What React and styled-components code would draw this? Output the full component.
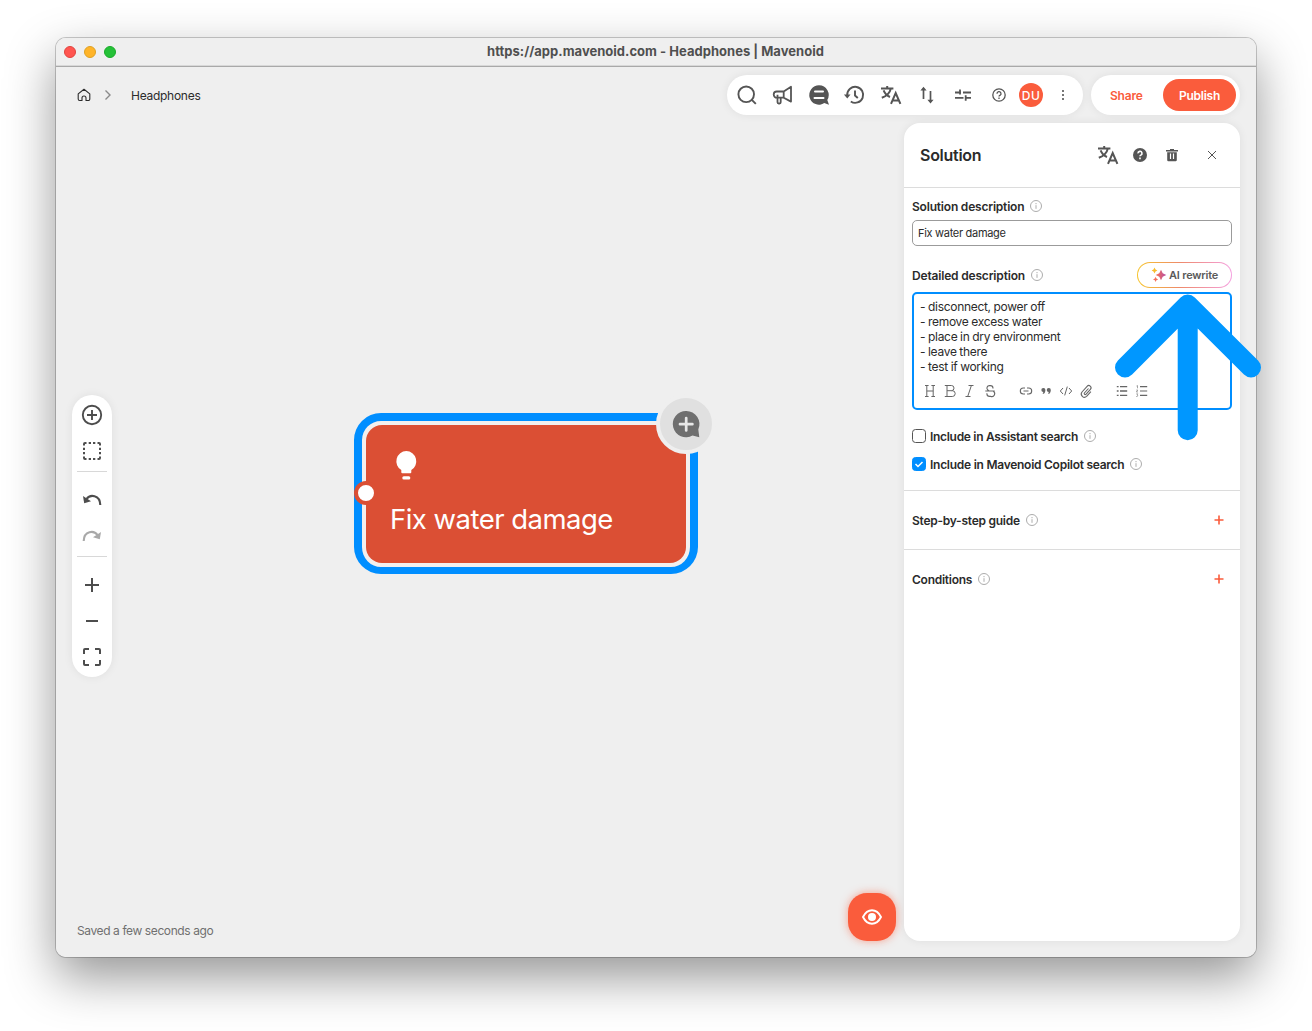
import styled, { createGlobalStyle } from "styled-components";

const GlobalStyle = createGlobalStyle`
    *, *::before, *::after {
        box-sizing: border-box;
    }

    body {
        margin: 0;
        background: #fff;
        color: #2b2b2b;
        font-family: Inter, Roboto, "Liberation Sans", sans-serif;
        font-size: 12px;
        overflow: hidden;
    }

    button, input, textarea {
        font: inherit;
        color: inherit;
        letter-spacing: inherit;
    }

    button {
        border: 0;
        padding: 0;
        background: none;
    }
`;

const Desktop = styled.div`
    position: relative;
    width: 1312px;
    height: 1031px;
    padding: 38px 56px;
`;

const Window = styled.div`
    display: flex;
    flex-direction: column;
    width: 1200px;
    height: 919px;
    overflow: hidden;
    background: #efefef;
    border-radius: 10px;
`;

const WindowShadow = styled.div`
    border-radius: 10px;
    width: 1200px;
    box-shadow:
        0 0 0 1px rgba(0, 0, 0, 0.2),
        0 20px 50px rgba(0, 0, 0, 0.42);
`;

const TitleBar = styled.div`
    display: grid;
    grid-template-columns: 80px 1fr 80px;
    align-items: center;
    flex: none;
    height: 29px;
    padding: 0 8px 1px;
    background: #efefef;
    border-bottom: 1px solid #a9a9a9;
    box-shadow: inset 0 -1px 0 #d8d8d8;
`;

const Lights = styled.div`
    display: flex;
    gap: 8px;
`;

const Light = styled.span`
    width: 12px;
    height: 12px;
    border-radius: 50%;
    background: ${(p) => p.$fill};
    border: 1px solid ${(p) => p.$ring};
`;

const WindowTitle = styled.div`
    padding-bottom: 1px;
    margin-left: -1px;
    font-size: 13px;
    font-weight: 700;
    letter-spacing: 0.02px;
    text-align: center;
    white-space: nowrap;
    color: #4f4f4f;
`;

const Workspace = styled.div`
    position: relative;
    display: flex;
    flex-direction: column;
    gap: 8px;
    flex: 1;
    min-height: 0;
    padding: 8px 16px 16px;
`;

const TopBar = styled.div`
    display: flex;
    align-items: center;
    gap: 8px;
    height: 40px;
    flex: none;
`;

const Breadcrumb = styled.nav`
    display: flex;
    align-items: center;
    flex: 1;
    padding-left: 4px;
    letter-spacing: -0.27px;
`;

const Crumb = styled.span`
    margin-left: 15px;
    line-height: 16px;
    padding-top: 1px;
`;

const Pill = styled.div`
    display: flex;
    align-items: center;
    height: 40px;
    background: #fff;
    border-radius: 20px;
    box-shadow: 0 0 10px rgba(0, 0, 0, 0.07);
`;

const ToolPill = styled(Pill)`
    width: 356px;
    padding: 0 4px 0 2px;
`;

const ToolButton = styled.button`
    display: flex;
    align-items: center;
    justify-content: center;
    width: ${(p) => p.$w || 36}px;
    height: 36px;
    flex: none;
    color: #555;
    margin-left: ${(p) => p.$gap || 0}px;
`;

const Avatar = styled.span`
    display: flex;
    align-items: center;
    justify-content: center;
    width: 24px;
    height: 24px;
    border-radius: 50%;
    background: #fa5c3c;
    color: #fff;
    font-size: 12px;
    font-weight: 500;
    letter-spacing: 0.6px;
`;

const ActionPill = styled(Pill)`
    width: 149px;
    justify-content: space-between;
    padding: 0 4px 0 19px;
`;

const ShareButton = styled.button`
    color: #fa5c3c;
    font-weight: 600;
    letter-spacing: -0.2px;
`;

const PublishButton = styled.button`
    width: 73px;
    height: 32px;
    border-radius: 16px;
    background: #fa5c3c;
    color: #fff;
    font-weight: 600;
    letter-spacing: -0.25px;
`;

const Main = styled.div`
    display: flex;
    gap: 8px;
    flex: 1;
    min-height: 0;
`;

const CanvasColumn = styled.div`
    display: flex;
    flex-direction: column;
    flex: 1;
`;

const Rail = styled.div`
    display: flex;
    flex-direction: column;
    align-items: center;
    width: 40px;
    height: 282px;
    margin-top: 272px;
    padding: 2px 0;
    border-radius: 20px;
    background: #fff;
    box-shadow: 0 0 10px rgba(0, 0, 0, 0.07);
`;

const RailButton = styled.button`
    display: flex;
    align-items: center;
    justify-content: center;
    width: 36px;
    height: 36px;
    flex: none;
    color: ${(p) => (p.$muted ? "#a9a9a9" : "#4d4d4d")};
`;

const RailDivider = styled.div`
    width: 30px;
    height: 1px;
    flex: none;
    margin: 2px 0 10px;
    background: #d8d8d8;
`;

const CanvasFooter = styled.div`
    display: flex;
    align-items: flex-end;
    justify-content: space-between;
    margin-top: auto;
`;

const SaveStatus = styled.div`
    padding: 0 0 2px 5px;
    line-height: 16px;
    color: #707070;
    letter-spacing: -0.4px;
`;

const PreviewButton = styled.button`
    display: flex;
    align-items: center;
    justify-content: center;
    width: 48px;
    height: 48px;
    border-radius: 19px;
    background: #fa5c3c;
    color: #fff;
    box-shadow: 0 0 8px rgba(250, 92, 60, 0.55);
`;

/* Flow node, placed freely on the canvas */
const Node = styled.div`
    position: absolute;
    left: 298px;
    top: 346px;
    width: 344px;
    height: 161px;
    padding: 4px;
    border: 8px solid #008eff;
    border-bottom-width: 7px;
    border-radius: 27px;
    background: #f3efee;
`;

const NodeCard = styled.div`
    width: 320px;
    height: 138px;
    padding: 25px 24px;
    border-radius: 16px;
    background: #db4f34;
    color: #fff;
`;

const NodeTitle = styled.div`
    margin-top: 20px;
    font-size: 27.5px;
    line-height: 34px;
    letter-spacing: -0.52px;
    white-space: nowrap;
`;

const NodePort = styled.span`
    position: absolute;
    left: -8px;
    top: 60px;
    width: 24px;
    height: 24px;
    border-radius: 50%;
    border: 4px solid #db4f34;
    background: #fff;
`;

const NodeAdd = styled.button`
    position: absolute;
    left: 294px;
    top: -27px;
    display: flex;
    align-items: center;
    justify-content: center;
    width: 60px;
    height: 60px;
    border-radius: 50%;
    border: 4px solid #efefef;
    background: #e0e0e0;
    color: #6f6f6f;
`;

const Panel = styled.aside`
    width: 336px;
    flex: none;
    border-radius: 16px;
    background: #fff;
    box-shadow: 0 0 10px rgba(0, 0, 0, 0.07);
`;

const PanelHeader = styled.header`
    display: flex;
    align-items: center;
    height: 65px;
    padding: 0 12px 1px 16px;
    border-bottom: 1px solid #dcdcdc;
`;

const PanelTitle = styled.h2`
    flex: 1;
    margin: 0;
    font-size: 16px;
    font-weight: 600;
    letter-spacing: -0.28px;
`;

const PanelButton = styled.button`
    display: flex;
    align-items: center;
    justify-content: center;
    width: 32px;
    height: 32px;
    color: #555;
    margin-left: ${(p) => p.$gap || 0}px;
`;

const Section = styled.section`
    padding: 9px 8px 0;
    height: 303px;
    border-bottom: 1px solid #dcdcdc;
`;

const Label = styled.div`
    display: flex;
    align-items: center;
    gap: 6px;
    height: 18px;
    font-weight: 600;
    letter-spacing: ${(p) => p.$spacing || "-0.26px"};
    white-space: nowrap;
`;

const TextInput = styled.input`
    display: block;
    width: 320px;
    height: 26px;
    margin-top: 5px;
    padding: 0 5px;
    border: 1px solid #9b9b9b;
    border-radius: 5px;
    background: #fff;
    font-size: 11px;
    letter-spacing: -0.3px;
    outline: 0;
`;

const DetailRow = styled.div`
    display: flex;
    align-items: center;
    justify-content: space-between;
    height: 26px;
    margin: 16px 0 4px;
`;

const RewriteButton = styled.button`
    display: flex;
    align-items: center;
    gap: 2px;
    width: 95px;
    height: 26px;
    padding-left: 13px;
    border: 1px solid transparent;
    border-radius: 13px;
    background:
        linear-gradient(#fff, #fff) padding-box,
        linear-gradient(90deg, #f7c52b, #ee8a6b 45%, #f5a0e0) border-box;
    font-size: 11px;
    font-weight: 600;
    letter-spacing: -0.2px;
    color: #5a5a5a;
    white-space: nowrap;
`;

const Editor = styled.div`
    width: 320px;
    height: 118px;
    padding: 5px 6px;
    border: 2px solid #008eff;
    border-radius: 5px;
`;

const EditorText = styled.div`
    height: 75px;
    line-height: 15px;
    letter-spacing: -0.3px;
    word-spacing: -0.3px;
    white-space: pre;
`;

const FormatBar = styled.div`
    display: flex;
    align-items: center;
    height: 20px;
    margin-top: 7px;
    color: #666;
`;

const FormatButton = styled.button`
    display: flex;
    align-items: center;
    justify-content: center;
    width: 20px;
    height: 20px;
    margin-left: ${(p) => p.$gap || 0}px;
`;

const CheckRow = styled.label`
    display: flex;
    align-items: center;
    gap: 4px;
    height: 18px;
    margin-top: ${(p) => p.$top}px;
`;

const Checkbox = styled.span`
    display: flex;
    align-items: center;
    justify-content: center;
    width: 14px;
    height: 14px;
    border-radius: 3.5px;
    border: 1px solid ${(p) => (p.$checked ? "#008eff" : "#555")};
    background: ${(p) => (p.$checked ? "#008eff" : "#fff")};
    color: #fff;
`;

const CollapsedSection = styled.section`
    display: flex;
    align-items: center;
    justify-content: space-between;
    height: 59px;
    padding: 0 16px 0 8px;
    border-bottom: 1px solid ${(p) => (p.$last ? "transparent" : "#dcdcdc")};
`;

const PointerArrow = styled.svg`
    position: absolute;
    left: 1112px;
    top: 290px;
    pointer-events: none;
`;

const Svg = styled.svg`
    display: block;
    flex: none;
    overflow: visible;
`;

function Icon({ size = 24, sw = 1.8, children, ...rest }) {
    return (
        <Svg
            width={size}
            height={size}
            viewBox={`0 0 ${size} ${size}`}
            fill="none"
            stroke="currentColor"
            strokeWidth={sw}
            {...rest}
        >
            {children}
        </Svg>
    );
}

const BreadcrumbArrow = styled(Icon)`
    margin-left: 8px;
`;

const InfoIcon = () => (
    <Icon size={12} sw={0.9} color="#a3a3a3">
        <circle cx="6" cy="6" r="5.5" />
        <path d="M6 5.2v3.6M6 3v1.2" />
    </Icon>
);

const TranslateIcon = () => (
    <Icon sw={2}>
        <path d="M2 5.4h12.4M8.2 3v2.4M4.6 7.4C6 10.8 8.5 13 11 14M11.8 5.6C11 9.5 7.5 13 2.8 14.8" />
        <path d="M12 20.8L16.7 10l4.7 10.8M13.7 17.6h6" />
    </Icon>
);

const PlusIcon = () => (
    <Icon size={10} sw={1.6} color="#fa5c3c">
        <path d="M5 .5v9M.5 5h9" />
    </Icon>
);

const TOOLS = [
    {
        name: "Search",
        icon: (
            <Icon sw={1.9}>
                <circle cx="11.2" cy="11.3" r="7.8" />
                <path d="M16.8 16.9l4 4" />
            </Icon>
        ),
    },
    {
        name: "Announcements",
        icon: (
            <Icon sw={1.8} strokeLinejoin="round">
                <path d="M20 3.8v14.800l-7.300-3.900H5.800a3.100 3.100 0 0 1 0-6.200h6.900zM12.700 8.500v6.200M6.500 11.800v7.500a1.200 1.200 0 0 0 1.200 1.200h.8a1.200 1.200 0 0 0 1.200-1.200v-4.600" />
            </Icon>
        ),
    },
    {
        name: "Assistant",
        icon: (
            <Icon>
                <path
                    d="M12 2.3a9.7 9.7 0 1 0 5.300 17.8l4.700 1.700-1.700-4.800A9.700 9.700 0 0 0 12 2.300z"
                    fill="currentColor"
                    stroke="none"
                />
                <path d="M8 8.400h8M7.500 15h9" stroke="#fff" strokeWidth="2" strokeLinecap="round" />
            </Icon>
        ),
    },
    {
        name: "History",
        icon: (
            <Icon sw={1.9}>
                <path d="M4.200 12a8 8 0 1 1 3.600 6.500M12 7.500v5l2.800 2.500" />
                <path d="M.9 11.400h6.600L4.300 15.400z" fill="currentColor" stroke="none" />
            </Icon>
        ),
    },
    { name: "Translate", icon: <TranslateIcon /> },
    {
        name: "Import and export",
        icon: (
            <Icon sw={1.7}>
                <path d="M8.5 16V5.5M15.5 8v11" />
                <path
                    d="M5.400 7.500l3.100-3.700 3.100 3.700zM12.400 16.700l3.100 3.700 3.100-3.700z"
                    fill="currentColor"
                    stroke="none"
                />
            </Icon>
        ),
    },
    {
        name: "Settings",
        icon: (
            <Icon sw={1.8}>
                <path d="M4 9.5h6M9 6.5v5M12 9.500h8M4 14.800h8.500M14.700 14.800H20M14.700 12.300v5.500" />
            </Icon>
        ),
    },
];

const RAIL_TOP = [
    {
        name: "Add",
        icon: (
            <Icon sw={1.9}>
                <circle cx="12" cy="12" r="9.2" />
                <path d="M12 7v10M7 12h10" />
            </Icon>
        ),
    },
    {
        name: "Select area",
        icon: (
            <Icon sw={2}>
                <path d="M4 6.500V5a1 1 0 0 1 1-1h1.500M17.500 4H19a1 1 0 0 1 1 1v1.500M20 17.500V19a1 1 0 0 1-1 1h-1.500M6.500 20H5a1 1 0 0 1-1-1v-1.500" />
                <path d="M8.700 4h2.300M13 4h2.300M8.700 20h2.300M13 20h2.300M4 8.700v2.300M4 13v2.300M20 8.700v2.300M20 13v2.300" />
            </Icon>
        ),
    },
];

const RAIL_BOTTOM = [
    {
        name: "Zoom in",
        icon: (
            <Icon sw={2}>
                <path d="M12 5v14M5 12h14" />
            </Icon>
        ),
    },
    {
        name: "Zoom out",
        icon: (
            <Icon sw={2}>
                <path d="M6 12h12" />
            </Icon>
        ),
    },
    {
        name: "Fit to screen",
        icon: (
            <Icon sw={2}>
                <path d="M4 9V5a1 1 0 0 1 1-1h4M15 4h4a1 1 0 0 1 1 1v4M20 15v4a1 1 0 0 1-1 1h-4M9 20H5a1 1 0 0 1-1-1v-4" />
            </Icon>
        ),
    },
];

const FORMATS = [
    {
        name: "Heading",
        icon: (
            <Icon size={14} sw={1}>
                <path d="M3.8 1.5v11M10.2 1.5v11M3.8 7h6.4M2 1.5h3.6M8.4 1.5H12M2 12.5h3.6M8.4 12.5H12" />
            </Icon>
        ),
    },
    {
        name: "Bold",
        icon: (
            <Icon size={14} sw={1}>
                <path d="M1.8 1.5h6.6a2.6 2.6 0 0 1 0 5.2H4M8.4 6.7h.9a2.9 2.9 0 0 1 0 5.8H1.8M4 1.5v11" />
            </Icon>
        ),
    },
    {
        name: "Italic",
        icon: (
            <Icon size={14} sw={1}>
                <path d="M5.5 1.5h5M2.5 12.5h5M8.4 1.5L4.7 12.5" />
            </Icon>
        ),
    },
    {
        name: "Strikethrough",
        icon: (
            <Icon size={14} sw={1.1}>
                <path d="M10 4.500V4.200a2.600 2.600 0 0 0-2.600-2.600h-1a2.500 2.500 0 0 0-1.600 4.400L6 7M2.300 7h9.400M10.300 7.200a2.900 2.900 0 0 1-2.500 5.200H6.600A2.700 2.700 0 0 1 3.900 9.700v-.400" />
            </Icon>
        ),
    },
    {
        name: "Link",
        gap: 16,
        icon: (
            <Icon size={14} sw={1.1}>
                <path d="M6 4H4.300a3 3 0 0 0 0 6H6M8 4h1.700a3 3 0 0 1 0 6H8M4.500 7h5" />
            </Icon>
        ),
    },
    {
        name: "Quote",
        icon: (
            <Icon size={14} fill="currentColor" stroke="none">
                <path d="M4.300 4a2 2 0 1 0 .1 4L3.600 9.800h1.300C6 8.700 6.400 7.400 6.400 6A2 2 0 0 0 4.300 4zM9.700 4a2 2 0 1 0 .1 4L9 9.800h1.300c1.100-1.100 1.500-2.400 1.500-3.800a2 2 0 0 0-2.100-2z" />
            </Icon>
        ),
    },
    {
        name: "Code",
        icon: (
            <Icon size={14} sw={1}>
                <path d="M4 4L1.300 7 4 10M10 4l2.700 3L10 10M8.300 2.600L5.700 11.400" />
            </Icon>
        ),
    },
    {
        name: "Attachment",
        icon: (
            <Icon size={14} sw={1.1}>
                <path d="M9.500 4.500L5.400 9a1 1 0 0 0 1.500 1.300l4.500-5a2.200 2.200 0 0 0-3.300-3L3 8a3.200 3.200 0 0 0 4.600 4.400l4.300-4.700" />
            </Icon>
        ),
    },
    {
        name: "Bulleted list",
        gap: 16,
        icon: (
            <Icon size={14} sw={1.3}>
                <path d="M5 2.600h7.200M5 7h7.200M5 11.400h7.200M1.800 2.600h1.800M1.800 7h1.800M1.800 11.400h1.800" />
            </Icon>
        ),
    },
    {
        name: "Numbered list",
        icon: (
            <Icon size={14} sw={1.2}>
                <path d="M5 2.600h7.200M5 7h7.200M5 11.400h7.200" />
                <path
                    d="M1.500 2l1-.4v2.700M1.400 6h1.300l-1.300 2h1.500M1.400 9.800h1.300L2 11l.8.600-.6.900h-.9"
                    strokeWidth=".6"
                />
            </Icon>
        ),
    },
];

const DETAILS = [
    "- disconnect, power off",
    "- remove excess water",
    "- place in dry environment",
    "- leave there",
    "- test if working",
].join("\n");

function Toolbar() {
    return (
        <ToolPill>
            {TOOLS.map((tool) => (
                <ToolButton key={tool.name} aria-label={tool.name}>
                    {tool.icon}
                </ToolButton>
            ))}
            <ToolButton aria-label="Help" $w={32} $gap={2}>
                <Icon size={16} sw={1.3}>
                    <circle cx="8" cy="8" r="6.2" />
                    <path d="M6 6.700a2 2 0 1 1 2.900 1.700c-.6.300-.9.600-.9 1.200M8 10.600v1.300" />
                </Icon>
            </ToolButton>
            <ToolButton aria-label="Account" $w={32}>
                <Avatar>DU</Avatar>
            </ToolButton>
            <ToolButton aria-label="More" $w={32}>
                <Icon size={16} fill="currentColor" stroke="none">
                    <circle cx="8" cy="4" r="1.1" />
                    <circle cx="8" cy="8" r="1.1" />
                    <circle cx="8" cy="12" r="1.1" />
                </Icon>
            </ToolButton>
        </ToolPill>
    );
}

function ToolRail() {
    return (
        <Rail>
            {RAIL_TOP.map((item) => (
                <RailButton key={item.name} aria-label={item.name}>
                    {item.icon}
                </RailButton>
            ))}
            <RailDivider />
            <RailButton aria-label="Undo">
                <Icon sw={2.1}>
                    <path d="M6.500 11C10 6 20 6.500 20.300 17" />
                    <path d="M3 8l1.200 7.200 6.800-2z" fill="currentColor" stroke="none" />
                </Icon>
            </RailButton>
            <RailButton aria-label="Redo" $muted>
                <Icon sw={2.1}>
                    <path d="M17.500 11C14 6 4 6.500 3.700 17" />
                    <path d="M21 8l-1.200 7.200-6.800-2z" fill="currentColor" stroke="none" />
                </Icon>
            </RailButton>
            <RailDivider />
            {RAIL_BOTTOM.map((item) => (
                <RailButton key={item.name} aria-label={item.name}>
                    {item.icon}
                </RailButton>
            ))}
        </Rail>
    );
}

function SolutionNode() {
    return (
        <Node>
            <NodeCard>
                <Icon size={32} fill="currentColor" stroke="none">
                    <path d="M16.300 1a10.300 10.300 0 0 0-5 19.100V22.200a1 1 0 0 0 1 1h8a1 1 0 0 0 1-1v-2.100a10.300 10.300 0 0 0-5-19.100z" />
                    <rect x="12.3" y="26.2" width="8" height="3.2" rx="1.5" />
                </Icon>
                <NodeTitle>Fix water damage</NodeTitle>
            </NodeCard>
            <NodePort />
            <NodeAdd aria-label="Add message">
                <Icon size={32} stroke="none">
                    <path
                        d="M16.200 3a13.100 13.100 0 1 0 6.300 24.400l6.800 1.900-1-7.800A13.100 13.100 0 0 0 16.200 3z"
                        fill="currentColor"
                    />
                    <path
                        d="M16.200 10v12.400M10 16.200h12.400"
                        stroke="#e8e8e8"
                        strokeWidth="2.7"
                        strokeLinecap="round"
                    />
                </Icon>
            </NodeAdd>
        </Node>
    );
}

function SolutionPanel() {
    return (
        <Panel>
            <PanelHeader>
                <PanelTitle>Solution</PanelTitle>
                <PanelButton aria-label="Translate">
                    <TranslateIcon />
                </PanelButton>
                <PanelButton aria-label="Help">
                    <Icon size={16} sw={1.6}>
                        <circle cx="8" cy="8" r="7" fill="currentColor" stroke="none" />
                        <path d="M6 6.400a2 2 0 1 1 2.900 1.700c-.6.300-.9.500-.9 1.200M8 10.600v1.600" stroke="#fff" />
                    </Icon>
                </PanelButton>
                <PanelButton aria-label="Delete">
                    <Icon size={16} stroke="none">
                        <path
                            d="M6 2h4v1h4v1.500H2V3h4zM3.200 5.200h9.600V13a1.200 1.200 0 0 1-1.200 1.200H4.400A1.200 1.200 0 0 1 3.200 13z"
                            fill="currentColor"
                        />
                        <path d="M6.500 6.500v5.500M9.500 6.500v5.500" stroke="#fff" strokeWidth="1.2" />
                    </Icon>
                </PanelButton>
                <PanelButton aria-label="Close" $gap={8}>
                    <Icon size={10} sw={1}>
                        <path d="M1 1l8 8M9 1L1 9" />
                    </Icon>
                </PanelButton>
            </PanelHeader>

            <Section>
                <Label $spacing="-0.2px">
                    Solution description
                    <InfoIcon />
                </Label>
                <TextInput defaultValue="Fix water damage" />
                <DetailRow>
                    <Label $spacing="-0.18px">
                        Detailed description
                        <InfoIcon />
                    </Label>
                    <RewriteButton>
                        <Svg width="16" height="16" viewBox="0 0 16 16">
                            <defs>
                                <linearGradient id="spark" x1="0" y1="0" x2="1" y2="0">
                                    <stop offset="0" stopColor="#f9744e" />
                                    <stop offset="1" stopColor="#b44ba8" />
                                </linearGradient>
                            </defs>
                            <path
                                d="M10 2.700l1.700 3.600 3.600 1.700-3.600 1.700L10 13.300 8.300 9.700 4.700 8l3.600-1.700z"
                                fill="url(#spark)"
                            />
                            <path d="M3.500.6l1 1.900 1.900 1-1.900 1-1 1.900-1-1.900-1.900-1 1.900-1z" fill="#f8bd2c" />
                            <path d="M4.600 9.800l.8 1.800 1.800.8-1.800.8-.8 1.800-.8-1.800-1.800-.8 1.800-.8z" fill="#f5705b" />
                        </Svg>
                        AI rewrite
                    </RewriteButton>
                </DetailRow>
                <Editor>
                    <EditorText>{DETAILS}</EditorText>
                    <FormatBar>
                        {FORMATS.map((format) => (
                            <FormatButton key={format.name} aria-label={format.name} $gap={format.gap}>
                                {format.icon}
                            </FormatButton>
                        ))}
                    </FormatBar>
                </Editor>
                <CheckRow $top={17}>
                    <Checkbox />
                    <Label $spacing="-0.3px">
                        Include in Assistant search
                        <InfoIcon />
                    </Label>
                </CheckRow>
                <CheckRow $top={10}>
                    <Checkbox $checked>
                        <Icon size={10} sw={1.5}>
                            <path d="M1.500 5l2.500 2.500L8.500 3" />
                        </Icon>
                    </Checkbox>
                    <Label>
                        Include in Mavenoid Copilot search
                        <InfoIcon />
                    </Label>
                </CheckRow>
            </Section>

            <CollapsedSection>
                <Label>
                    Step-by-step guide
                    <InfoIcon />
                </Label>
                <PlusIcon />
            </CollapsedSection>
            <CollapsedSection $last>
                <Label>
                    Conditions
                    <InfoIcon />
                </Label>
                <PlusIcon />
            </CollapsedSection>
        </Panel>
    );
}

export default function App() {
    return (
        <Desktop>
            <GlobalStyle />
            <WindowShadow>
                <Window>
                    <TitleBar>
                        <Lights>
                            <Light $fill="#ff5550" $ring="#e0443e" />
                            <Light $fill="#ffb429" $ring="#dea123" />
                            <Light $fill="#25c138" $ring="#1aab29" />
                        </Lights>
                        <WindowTitle>https://app.mavenoid.com - Headphones | Mavenoid</WindowTitle>
                    </TitleBar>
                    <Workspace>
                        <TopBar>
                            <Breadcrumb>
                                <Icon size={16} sw={1.1}>
                                    <path
                                        d="M6 13.500H3.700a1.500 1.500 0 0 1-1.500-1.500V6.900L8 2.200l5.800 4.700V12a1.500 1.500 0 0 1-1.500 1.500H10V11a2 2 0 0 0-4 0z"
                                        strokeLinejoin="round"
                                    />
                                </Icon>
                                <BreadcrumbArrow size={16} sw={1.4} color="#8a8a8a">
                                    <path d="M5.500 3.500L10 8l-4.500 4.500" />
                                </BreadcrumbArrow>
                                <Crumb>Headphones</Crumb>
                            </Breadcrumb>
                            <Toolbar />
                            <ActionPill>
                                <ShareButton>Share</ShareButton>
                                <PublishButton>Publish</PublishButton>
                            </ActionPill>
                        </TopBar>
                        <Main>
                            <CanvasColumn>
                                <ToolRail />
                                <CanvasFooter>
                                    <SaveStatus>Saved a few seconds ago</SaveStatus>
                                    <PreviewButton aria-label="Preview">
                                        <Icon sw={1.9}>
                                            <path d="M3 12c4.500-9 13.500-9 18 0-4.500 9-13.500 9-18 0z" />
                                            <circle cx="12" cy="12" r="4" fill="currentColor" stroke="none" />
                                        </Icon>
                                    </PreviewButton>
                                </CanvasFooter>
                            </CanvasColumn>
                            <SolutionPanel />
                        </Main>
                        <SolutionNode />
                    </Workspace>
                </Window>
            </WindowShadow>
            <PointerArrow width="152" height="154" viewBox="0 0 152 154" aria-hidden="true">
                <path
                    d="M13 77.500L75.700 14.500l63.300 63M75.700 14.500v125.700"
                    fill="none"
                    stroke="#0097ff"
                    strokeWidth="20"
                    strokeLinecap="round"
                    strokeLinejoin="round"
                />
            </PointerArrow>
        </Desktop>
    );
}
